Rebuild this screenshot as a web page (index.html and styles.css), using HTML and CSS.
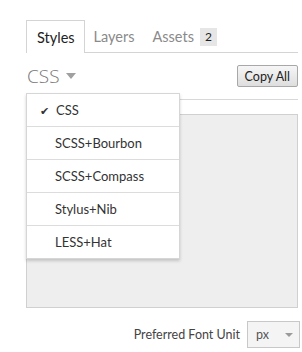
FILE: index.html
```html
<!DOCTYPE html>
<html>
<head>
    <title>Code Panel</title>
    <link rel="stylesheet" href="styles.css">
</head>
<body>
    <div class="panel">
        <div class="tabs">
            <div class="tab active">Styles</div>
            <div class="tab">Layers</div>
            <div class="tab">Assets <span class="badge">2</span></div>
        </div>
        <div class="toolbar">
            <div class="lang">CSS <span class="arrow"></span></div>
            <button class="copy">Copy All</button>
        </div>
        <div class="code"></div>
        <div class="footer">
            <span>Preferred Font Unit</span>
            <div class="unit">px <span class="arrow small"></span></div>
        </div>
        <ul class="menu">
            <li class="checked">CSS</li>
            <li>SCSS+Bourbon</li>
            <li>SCSS+Compass</li>
            <li>Stylus+Nib</li>
            <li>LESS+Hat</li>
        </ul>
    </div>
</body>
</html>
```

FILE: styles.css
```css
body {
    margin: 0;
    font-family: Lato, "Open Sans", sans-serif;
    color: #333;
    background: #fff;
}

.panel {
    position: relative;
    padding: 20px 4px 0 26px;
}

.tabs {
    display: flex;
    height: 32px;
    border-bottom: 1px solid #d4d4d4;
}

.tab {
    display: flex;
    align-items: center;
    padding: 0 9px;
    font-size: 14.5px;
    color: #8a8a8a;
    margin-bottom: -1px;
}

.tab.active {
    padding-left: 10px;
    color: #222;
    border: 1px solid #d4d4d4;
    border-bottom: none;
    background: #fff;
}

.badge {
    display: inline-block;
    margin-left: 6px;
    padding: 0 5px;
    height: 18px;
    line-height: 18px;
    font-size: 12px;
    color: #222;
    background: #e6e6e6;
}

.toolbar {
    display: flex;
    justify-content: space-between;
    align-items: center;
    height: 46px;
    border-bottom: 1px solid #d8d8d8;
}

.lang {
    display: flex;
    align-items: center;
    font-family: "Open Sans", sans-serif;
    font-size: 19px;
    font-weight: 300;
    color: #777;
    margin-left: 1px;
}

.arrow {
    width: 0;
    height: 0;
    margin-left: 6px;
    border-left: 5px solid transparent;
    border-right: 5px solid transparent;
    border-top: 6px solid #a0a0a0;
}

.arrow.small {
    border-left-width: 4px;
    border-right-width: 4px;
    border-top-width: 4px;
    border-top-color: #9a9a9a;
}

.copy {
    height: 22px;
    padding: 0 7px;
    font-family: inherit;
    font-size: 12.5px;
    color: #222;
    border: 1px solid #a8a8a8;
    border-radius: 2px;
    background: linear-gradient(#f6f6f6, #dedede);
}

.code {
    height: 192px;
    margin-top: 14px;
    background: #eeeeee;
    border: 1px solid #d0d0d0;
}

.footer {
    display: flex;
    justify-content: flex-end;
    align-items: center;
    gap: 7px;
    margin-top: 13px;
    margin-right: -2px;
    font-size: 12.5px;
    color: #444;
}

.unit {
    display: flex;
    justify-content: space-between;
    align-items: center;
    width: 53px;
    height: 27px;
    box-sizing: border-box;
    padding: 0 6px 0 8px;
    border: 1px solid #c8c8c8;
    background: #f4f4f4;
    font-size: 12.5px;
    color: #555;
}

.menu {
    position: absolute;
    top: 93px;
    left: 26px;
    width: 152px;
    margin: 0;
    padding: 0;
    list-style: none;
    background: #fff;
    border: 1px solid #d6d6d6;
    box-shadow: 0 2px 3px rgba(0, 0, 0, 0.18);
}

.menu li {
    height: 32px;
    line-height: 32px;
    padding-left: 28px;
    font-size: 13px;
    color: #333;
    border-top: 1px solid #dcdcdc;
}

.menu li:first-child {
    border-top: none;
}

.menu li.checked::before {
    content: "\2714";
    display: inline-block;
    width: 16px;
    margin-left: -15px;
    font-family: "DejaVu Sans", sans-serif;
    font-size: 11px;
}
```
